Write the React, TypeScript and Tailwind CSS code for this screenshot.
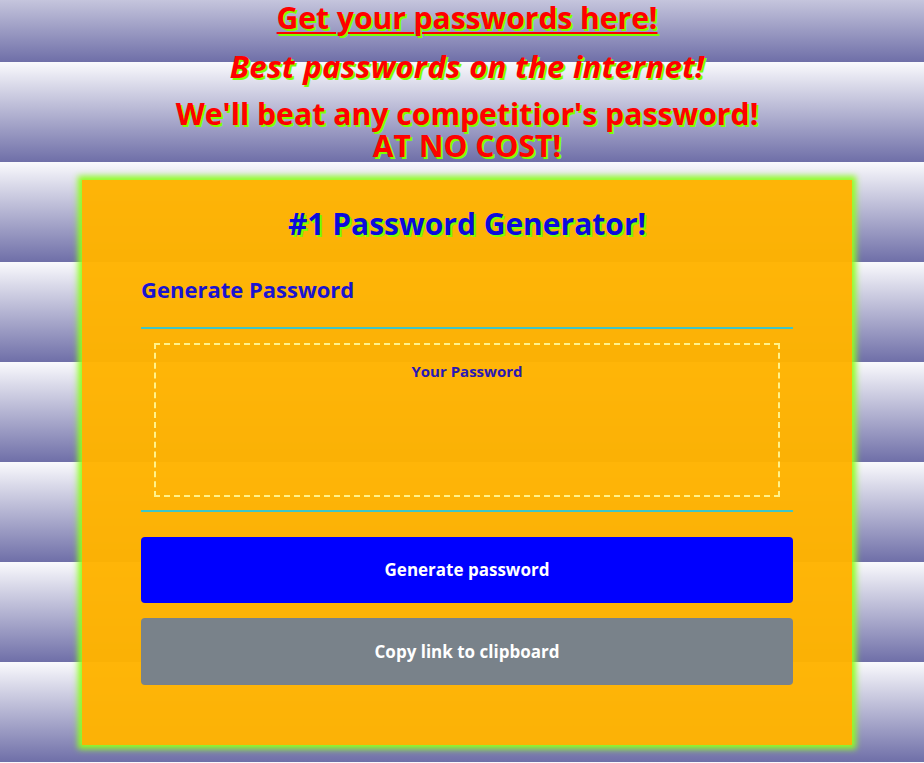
import React from 'react';

const App = () => {
  return (
    <div className="min-h-screen bg-[repeating-linear-gradient(to_bottom,#fafafd_-38px,#6f6fa8_62px)] font-['Open_Sans',sans-serif] pl-[10px] pb-[18px]">
      {/* Header */}
      <div className="text-center text-[#ff0000] font-bold [text-shadow:2px_2px_0_#7fff00]">
        <h1 className="text-[30px] leading-[36px] underline decoration-2 underline-offset-[3px]">
          Get your passwords here!
        </h1>
        <h2 className="mt-[12px] text-[31px] leading-[36px] italic tracking-[0.3px]">
          Best passwords on the internet!
        </h2>
        <h2 className="mt-[14px] text-[30px] leading-[32px] tracking-[0.1px]">
          We'll beat any competitior's password!
          <br />
          AT NO COST!
        </h2>
      </div>

      {/* Card */}
      <div className="mx-auto mt-[18px] w-[770px] bg-[#ffb300]/[0.97] shadow-[0_0_6px_4px_#8fff20] px-[59px] pt-[22px] pb-[60px]">
        <h3 className="text-center text-[30px] leading-[44px] font-bold text-[#0b0bdc] [text-shadow:2px_2px_0_#7fff00]">
          #1 Password Generator!
        </h3>
        <h4 className="mt-[27px] text-[22px] leading-[32px] font-bold text-[#1a14d0]">
          Generate Password
        </h4>
        <div className="mt-[22px] border-t-2 border-[#3ec6c8]" />
        <div className="mx-[13px] mt-[14px] h-[154px] border-2 border-dashed border-[#fff28a] pt-[14px] text-center">
          <span className="text-[15px] font-bold text-[#2a18b4]">Your Password</span>
        </div>
        <div className="mt-[13px] border-t-2 border-[#3ec6c8]" />
        <button className="mt-[25px] w-full h-[66px] rounded-[4px] bg-[#0000ff] text-white text-[17px] font-bold">
          Generate password
        </button>
        <button className="mt-[15px] w-full h-[67px] rounded-[4px] bg-[#79828a] text-white text-[17px] font-bold">
          Copy link to clipboard
        </button>
      </div>
    </div>
  );
};

export default App;
